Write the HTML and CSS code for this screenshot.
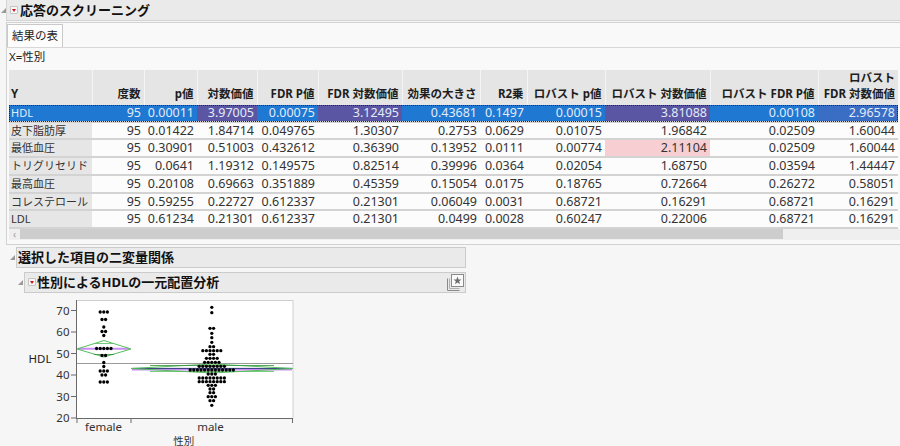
FILE: index.html
```html
<!DOCTYPE html>
<html lang="ja">
<head>
<meta charset="utf-8">
<title>応答のスクリーニング</title>
<link rel="stylesheet" href="styles.css">
</head>
<body>
<div class="report">
  <div class="node-head top">
    <span class="tri-cell"><span class="tri"></span></span>
    <div class="bar bar-top">
      <span class="menu-icon"></span>
      <span class="title">応答のスクリーニング</span>
    </div>
  </div>
  <div class="panel">
    <div class="tabs"><div class="tab">結果の表</div></div>
    <div class="xlabel">X=性別</div>
    <div class="table-wrap">
      <table class="grid">
        <colgroup>
          <col class="c1"><col class="c2"><col class="c3"><col class="c4"><col class="c5"><col class="c6">
          <col class="c7"><col class="c8"><col class="c9"><col class="c10"><col class="c11"><col class="c12">
        </colgroup>
        <thead>
          <tr>
            <th class="y">Y</th><th>度数</th><th>p値</th><th>対数価値</th><th>FDR P値</th><th>FDR 対数価値</th>
            <th>効果の大きさ</th><th>R2乗</th><th>ロバスト p値</th><th>ロバスト 対数価値</th><th>ロバスト FDR P値</th>
            <th>ロバスト<br>FDR 対数価値</th>
          </tr>
        </thead>
        <tbody>
          <tr class="sel">
            <td class="y">HDL</td><td>95</td><td>0.00011</td><td class="hl">3.97005</td><td>0.00075</td><td class="hl">3.12495</td>
            <td>0.43681</td><td>0.1497</td><td>0.00015</td><td class="hl">3.81088</td><td>0.00108</td><td class="hl2">2.96578</td>
          </tr>
          <tr>
            <td class="y">皮下脂肪厚</td><td>95</td><td>0.01422</td><td>1.84714</td><td>0.049765</td><td>1.30307</td>
            <td>0.2753</td><td>0.0629</td><td>0.01075</td><td>1.96842</td><td>0.02509</td><td>1.60044</td>
          </tr>
          <tr>
            <td class="y">最低血圧</td><td>95</td><td>0.30901</td><td>0.51003</td><td>0.432612</td><td>0.36390</td>
            <td>0.13952</td><td>0.0111</td><td>0.00774</td><td class="pink">2.11104</td><td>0.02509</td><td>1.60044</td>
          </tr>
          <tr>
            <td class="y">トリグリセリド</td><td>95</td><td>0.0641</td><td>1.19312</td><td>0.149575</td><td>0.82514</td>
            <td>0.39996</td><td>0.0364</td><td>0.02054</td><td>1.68750</td><td>0.03594</td><td>1.44447</td>
          </tr>
          <tr>
            <td class="y">最高血圧</td><td>95</td><td>0.20108</td><td>0.69663</td><td>0.351889</td><td>0.45359</td>
            <td>0.15054</td><td>0.0175</td><td>0.18765</td><td>0.72664</td><td>0.26272</td><td>0.58051</td>
          </tr>
          <tr>
            <td class="y">コレステロール</td><td>95</td><td>0.59255</td><td>0.22727</td><td>0.612337</td><td>0.21301</td>
            <td>0.06049</td><td>0.0031</td><td>0.68721</td><td>0.16291</td><td>0.68721</td><td>0.16291</td>
          </tr>
          <tr>
            <td class="y">LDL</td><td>95</td><td>0.61234</td><td>0.21301</td><td>0.612337</td><td>0.21301</td>
            <td>0.0499</td><td>0.0028</td><td>0.60247</td><td>0.22006</td><td>0.68721</td><td>0.16291</td>
          </tr>
        </tbody>
      </table>
    </div>
    <div class="hscroll"><span class="arrow">‹</span><div class="thumb"></div></div>
  </div>

  <div class="node-head n2">
    <span class="tri-cell"><span class="tri"></span></span>
    <div class="bar bar-n2"><span class="title">選択した項目の二変量関係</span></div>
  </div>

  <div class="node-head n3">
    <span class="tri-cell"><span class="tri"></span></span>
    <div class="bar bar-n3">
      <span class="menu-icon"></span>
      <span class="title">性別によるHDLの一元配置分析</span>
      <svg class="star-icon" width="17" height="17" viewBox="0 0 17 17">
        <path d="M0.5 4.5 V16.5 H12.5" fill="none" stroke="#8a8a8a" stroke-width="1"/>
        <path d="M2.5 4.5 V14.5 H12.5" fill="none" stroke="#b0b0b0" stroke-width="1"/>
        <rect x="4.5" y="0.5" width="12" height="12" fill="#fafafa" stroke="#8a8a8a"/>
        <polygon points="10.5,2.6 11.6,5.4 14.5,5.5 12.2,7.3 13,10.2 10.5,8.5 8,10.2 8.8,7.3 6.5,5.5 9.4,5.4" fill="#6e6e6e"/>
      </svg>
    </div>
  </div>

  <svg class="chart" width="276" height="153" viewBox="24 293 276 153">
    <rect x="76.5" y="298.5" width="216.5" height="118" fill="#ffffff" stroke="#cfcfcf"/>
    <g stroke="#6a6a6a" stroke-width="1">
      <line x1="76.5" y1="298" x2="76.5" y2="417"/>
      <line x1="76" y1="416.5" x2="293" y2="416.5"/>
      <line x1="71" y1="308.5" x2="76" y2="308.5"/>
      <line x1="71" y1="330" x2="76" y2="330"/>
      <line x1="71" y1="351.5" x2="76" y2="351.5"/>
      <line x1="71" y1="373" x2="76" y2="373"/>
      <line x1="71" y1="394.5" x2="76" y2="394.5"/>
      <line x1="71" y1="416" x2="76" y2="416"/>
      <line x1="77" y1="417" x2="77" y2="421"/>
      <line x1="131" y1="417" x2="131" y2="421"/>
      <line x1="292.5" y1="417" x2="292.5" y2="421"/>
    </g>
    <g class="ticks" text-anchor="end">
      <text x="69.5" y="312.5">70</text>
      <text x="69.5" y="334">60</text>
      <text x="69.5" y="355.5">50</text>
      <text x="69.5" y="377">40</text>
      <text x="69.5" y="398.5">30</text>
      <text x="69.5" y="420">20</text>
    </g>
    <text class="axis-name" x="28.5" y="360.5">HDL</text>
    <g class="ticks" text-anchor="middle">
      <text x="103.5" y="429">female</text>
      <text x="210.5" y="429">male</text>
    </g>
    <text class="x-title" x="183.7" y="442.5" text-anchor="middle">性別</text>

    <line x1="77" y1="361.5" x2="293" y2="361.5" stroke="#9a9a9a" stroke-width="1"/>

    <line x1="78" y1="346.8" x2="129" y2="346.8" stroke="#c98cf2" stroke-width="2"/>
    <polygon points="77,347 104,338.5 131,347 104,355" fill="none" stroke="#58bd5e" stroke-width="1"/>
    <line x1="94" y1="341.5" x2="114" y2="341.5" stroke="#58bd5e" stroke-width="0.8"/>
    <line x1="94" y1="352.5" x2="114" y2="352.5" stroke="#2f8f3a" stroke-width="0.8"/>

    <line x1="132" y1="367.6" x2="292" y2="367.6" stroke="#c98cf2" stroke-width="2"/>
    <line x1="132" y1="366.4" x2="292" y2="366.4" stroke="#2d3a7a" stroke-width="1"/>
    <polygon points="131,366.5 212,362 293,366.5 212,371" fill="none" stroke="#58bd5e" stroke-width="1"/>
    <line x1="150" y1="363.5" x2="274" y2="363.5" stroke="#2f8f3a" stroke-width="0.8"/>
    <line x1="150" y1="369.5" x2="274" y2="369.5" stroke="#58bd5e" stroke-width="0.8"/>

    <g class="dots" id="dots" fill="#000"></g>
  </svg>
</div>
<script src="script.js"></script>
</body>
</html>
```

FILE: styles.css
```css
html, body {
  margin: 0;
  padding: 0;
  overflow: hidden;
}

body {
  width: 900px;
  height: 446px;
  background: #f6f6f6;
  font-family: "Noto Sans", "Noto Sans CJK JP", sans-serif;
  color: #333;
}

.report {
  width: 900px;
}

/* outline node headers */
.node-head {
  display: flex;
  height: 21px;
}

.tri-cell {
  display: flex;
  align-items: center;
  justify-content: center;
}

.tri {
  width: 0;
  height: 0;
  border-left: 5px solid transparent;
  border-bottom: 5px solid #9a9a9a;
}

.bar {
  display: flex;
  align-items: center;
  background: #eaeaea;
  box-sizing: border-box;
  height: 21px;
}

.bar-top {
  flex: 1;
  padding-left: 3px;
  border-left: 1px solid #d6d6d6;
  border-bottom: 1px solid #d3d3d3;
}

.top .tri-cell {
  width: 6px;
}

.n2 {
  margin-top: 2px;
}

.n2 .tri-cell {
  width: 8px;
  margin-left: 8px;
}

.bar-n2 {
  width: 450px;
  border: 1px solid #cbcbcb;
}

.n3 {
  margin-top: 4px;
}

.n3 .tri-cell {
  width: 8px;
  margin-left: 16px;
}

.bar-n3 {
  width: 442px;
  border: 1px solid #cbcbcb;
  padding-left: 3px;
}

.title {
  font-size: 13px;
  font-weight: bold;
  color: #111;
  line-height: 19px;
  white-space: nowrap;
}

.menu-icon {
  position: relative;
  width: 8px;
  height: 8px;
  box-sizing: border-box;
  border: 1px solid #c4c4c4;
  border-radius: 1px;
  background: #f7f7f7;
  margin-right: 2px;
  flex: none;
}

.menu-icon::after {
  content: "";
  position: absolute;
  left: 1px;
  top: 2px;
  border-left: 2px solid transparent;
  border-right: 2px solid transparent;
  border-top: 3px solid #d0141e;
}

.bar-n3 .menu-icon {
  margin-right: 1px;
}

.bar-n2 .title {
  padding-left: 1px;
}

.star-icon {
  margin-left: auto;
  margin-right: 1px;
  flex: none;
}

/* main panel */
.panel {
  margin-left: 6px;
  margin-top: 1px;
  border: 1px solid #d2d2d2;
  border-right: none;
  background: #f9f9f9;
  overflow: hidden;
  padding-bottom: 4px;
}

.tabs {
  margin-top: 1px;
  border-bottom: 1px solid #d8d8d8;
  display: flex;
}

.tab {
  height: 23px;
  box-sizing: border-box;
  padding: 0 4px;
  border: 1px solid #c9c9c9;
  border-bottom: none;
  background: #fdfdfd;
  font-size: 11.5px;
  line-height: 22px;
  color: #222;
}

.xlabel {
  height: 22px;
  line-height: 18px;
  padding-left: 2px;
  font-size: 11.5px;
  color: #222;
}

.table-wrap {
  padding-left: 2px;
}

.grid {
  border-collapse: collapse;
  table-layout: fixed;
  width: 889px;
}

.c1 { width: 83px; }
.c2 { width: 52px; }
.c3 { width: 53px; }
.c4 { width: 60px; }
.c5 { width: 61px; }
.c6 { width: 84px; }
.c7 { width: 78px; }
.c8 { width: 47px; }
.c9 { width: 78px; }
.c10 { width: 105px; }
.c11 { width: 108px; }
.c12 { width: 80px; }

.grid th {
  height: 33px;
  box-sizing: border-box;
  background: #e5e5e5;
  border-left: 1px solid #f4f4f4;
  font-size: 11.5px;
  font-weight: bold;
  color: #1e1e1e;
  text-align: right;
  vertical-align: bottom;
  padding: 0 3px 3px 0;
  line-height: 16px;
  white-space: nowrap;
}

.grid th.y {
  text-align: left;
  padding-left: 2px;
  border-left: none;
}

.grid td {
  padding: 0 3px 0 0;
  line-height: 15.7px;
  font-size: 12.5px;
  text-align: right;
  white-space: nowrap;
  background: #fcfcfc;
  border-bottom: 2px solid #d3d3d3;
  color: #333;
}

.grid td.y {
  text-align: left;
  padding-left: 2px;
  font-size: 11px;
  background: #e6e6e6;
  color: #333;
}

.grid tr.sel {
  outline: 1px dotted #1c2450;
  outline-offset: -1px;
}

.grid tr.sel td {
  background: #1f78d1;
  color: #e3ebf8;
}

.grid tr.sel td.hl {
  background: #5b56a3;
}

.grid tr.sel td.hl2 {
  background: #3a6dc4;
}

.grid td.pink {
  background: #f7cfd3;
}

/* horizontal scrollbar */
.hscroll {
  margin-left: 2px;
  height: 11px;
  background: #efefef;
  display: flex;
  align-items: center;
}

.arrow {
  width: 11px;
  font-size: 10px;
  line-height: 11px;
  color: #a0a0a0;
  text-align: center;
}

.thumb {
  width: 763px;
  height: 10px;
  background: #cdcdcd;
}

/* chart */
.chart {
  display: block;
  margin-top: 2px;
  margin-left: 24px;
}

.ticks text,
.ticks {
  font-family: "Noto Sans", sans-serif;
  font-size: 11.5px;
  fill: #333;
}

.axis-name {
  font-family: "Noto Sans", sans-serif;
  font-size: 11.5px;
  fill: #222;
}

.x-title {
  font-family: "Noto Sans CJK JP", sans-serif;
  font-size: 10.5px;
  fill: #333;
}
```

FILE: script.js
```js
(function () {
  var NS = "http://www.w3.org/2000/svg";
  var g = document.getElementById("dots");
  var groups = [
    { cx: 103.8, rows: [[310, 3], [317.5, 2], [325, 1], [329.5, 2], [333.5, 1], [346.5, 5], [353.5, 2], [360.5, 1], [364.5, 1], [369, 3], [373, 2], [380, 3]] },
    { cx: 211.8, rows: [[305.3, 1], [310.7, 1], [326.3, 2], [331.3, 1], [335.7, 1], [340.3, 1], [344.7, 2], [348.7, 6], [352.3, 2], [356.3, 4], [360.3, 5], [364.3, 8], [368, 13], [372, 3], [376, 8], [379.7, 8], [383.3, 3], [387, 2], [390.7, 2], [394.7, 3], [398.7, 2], [403.3, 1]] }
  ];
  groups.forEach(function (grp) {
    grp.rows.forEach(function (r) {
      var y = r[0], n = r[1];
      for (var i = 0; i < n; i++) {
        var c = document.createElementNS(NS, "circle");
        c.setAttribute("cx", (grp.cx + (i - (n - 1) / 2) * 3.6).toFixed(2));
        c.setAttribute("cy", y);
        c.setAttribute("r", "1.65");
        g.appendChild(c);
      }
    });
  });
})();
```
